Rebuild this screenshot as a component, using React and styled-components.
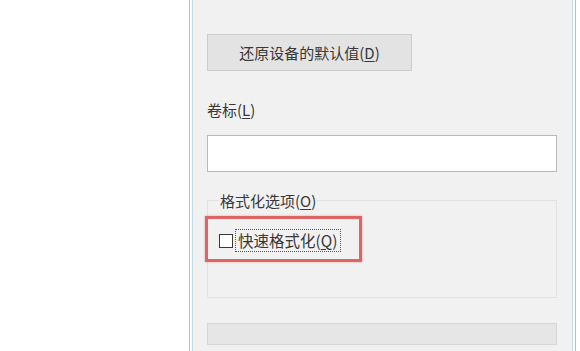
import React from "react";
import styled, { createGlobalStyle } from "styled-components";

const Global = createGlobalStyle`
  html, body { margin: 0; padding: 0; background: #ffffff; }
  body { font-family: "Noto Sans CJK SC", "Noto Sans", sans-serif; }
  * { box-sizing: border-box; }
`;

const Page = styled.div`
  display: flex;
  width: 580px;
  height: 351px;
  overflow: hidden;
  background: #ffffff;
`;

const Blank = styled.div`
  width: 189px;
  flex: none;
  background: #ffffff;
`;

const Window = styled.div`
  width: 387px;
  flex: none;
  display: flex;
  padding: 0 2px;
  background: #fafbfb;
  border-left: 1px solid #a3cad9;
  border-right: 1px solid #a3cad9;
`;

const Content = styled.div`
  flex: 1;
  display: flex;
  flex-direction: column;
  align-items: flex-start;
  padding: 34px 14px 0 14px;
  background: #f1f1f1;
  border-left: 1px solid #c4dce5;
  border-right: 1px solid #c4dce5;
  color: #383838;
  font-size: 15px;
`;

const Button = styled.div`
  width: 205px;
  height: 37px;
  display: flex;
  align-items: center;
  justify-content: center;
  background: #e3e3e3;
  border: 1px solid #cdcdcd;
  font-size: 15px;
  line-height: 18px;
  color: #383838;
`;

const Label = styled.div`
  margin-top: ${(p) => p.$top || 0}px;
  font-size: 15px;
  line-height: 18px;
  color: #383838;
`;

const Key = styled.span`
  text-decoration: underline;
  text-underline-offset: 2px;
`;

const Input = styled.div`
  margin-top: 16px;
  width: 350px;
  height: 37px;
  background: #ffffff;
  border: 1px solid #b9b9b9;
`;

const Group = styled.fieldset`
  margin: 20px 0 0 0;
  width: 350px;
  height: 106px;
  padding: 0 11px;
  border: 1px solid #e2e2e2;
`;

const Legend = styled.legend`
  margin-left: 0;
  padding: 0 1px;
  font-size: 15px;
  line-height: 17px;
  color: #383838;
`;

const Row = styled.div`
  position: relative;
  margin-top: 20px;
  display: flex;
  align-items: center;
  gap: 2px;
  height: 23px;
`;

const Box = styled.span`
  width: 14px;
  height: 14px;
  background: #ffffff;
  border: 1px solid #3a3a3a;
  flex: none;
`;

const Focus = styled.span`
  padding: 1px 2px;
  border: 1px dotted #555;
  font-size: 15.5px;
  line-height: 19px;
  color: #383838;
`;

const Highlight = styled.div`
  position: absolute;
  left: -14px;
  top: -13px;
  width: 157px;
  height: 46px;
  border: 3px solid #df6464;
  box-shadow: 0 0 2px rgba(220, 90, 90, 0.5);
  pointer-events: none;
`;

const Bar = styled.div`
  margin-top: 25px;
  width: 350px;
  height: 22px;
  background: #e6e6e6;
  border: 1px solid #d6d6d6;
`;

export default function App() {
  return (
    <>
      <Global />
      <Page>
        <Blank />
        <Window>
          <Content>
            <Button>
              还原设备的默认值(<Key>D</Key>)
            </Button>
            <Label $top={30}>
              卷标(<Key>L</Key>)
            </Label>
            <Input />
            <Group>
              <Legend>
                格式化选项(<Key>O</Key>)
              </Legend>
              <Row>
                <Box />
                <Focus>
                  快速格式化(<Key>Q</Key>)
                </Focus>
                <Highlight />
              </Row>
            </Group>
            <Bar />
          </Content>
        </Window>
      </Page>
    </>
  );
}
